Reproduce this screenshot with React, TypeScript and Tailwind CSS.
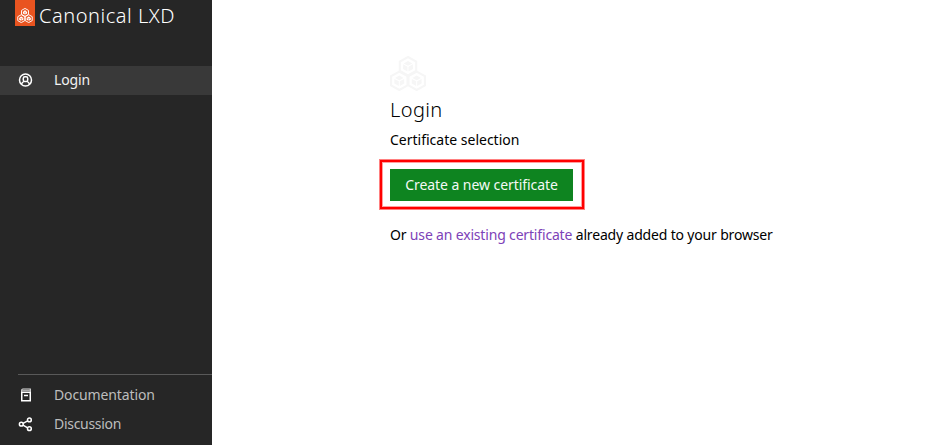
import type { ReactNode } from "react";

const centers = [
  [18, 10.2],
  [9.3, 24.8],
  [26.7, 24.8],
];

function Cluster({ className, line }: { className: string; line: number }) {
  return (
    <svg viewBox="0 0 36 35" className={className} fill="none" stroke="currentColor" strokeWidth={line}>
      {centers.map(([x, y]) => (
        <g key={`${x}-${y}`} transform={`translate(${x} ${y})`}>
          <path d="M0-9.2 8.2-4.6V4.6L0 9.2-8.2 4.6V-4.6Z" />
          <path d="M0-5.2 4.3-2.8 0-.5-4.3-2.8ZM-4.9-1.9-.5.5V5.2L-4.9 2.8ZM4.9-1.9.5.5V5.2L4.9 2.8Z" fill="currentColor" stroke="none" />
        </g>
      ))}
    </svg>
  );
}

function UserIcon() {
  return (
    <svg viewBox="0 0 16 16" className="size-4" fill="none" stroke="#fff" strokeWidth="1.5">
      <circle cx="7.5" cy="8" r="6" />
      <rect x="5.3" y="4.7" width="4.4" height="4.8" rx="1.6" />
      <path d="M3.5 12.2C3.9 10.6 4.9 9.8 6.3 9.4M11.5 12.2C11.1 10.6 10.1 9.8 8.7 9.4" />
    </svg>
  );
}

function BookIcon() {
  return (
    <svg viewBox="0 0 16 16" className="size-4" fill="none" stroke="#fff" strokeWidth="1.5">
      <path d="M3.75 5.2V13.75H12.25V5.2M3 5.25H13" />
      <path d="M3.7 5V3.2Q3.7 2 4.9 2H12.3V5" stroke="#ddd" strokeWidth="1.2" />
      <path d="M4 3.5H12" stroke="#aaa" strokeWidth="1.5" />
      <path d="M6 8.5H10" />
    </svg>
  );
}

function ShareIcon() {
  return (
    <svg viewBox="0 0 16 16" className="size-4" fill="none" stroke="#fff" strokeWidth="1.5">
      <circle cx="3.3" cy="8.2" r="1.9" />
      <circle cx="11.4" cy="3.9" r="1.9" />
      <circle cx="11.4" cy="12.7" r="1.9" />
      <path d="M5 7.3 9.7 4.8M5 9.1 9.7 11.8" />
    </svg>
  );
}

function NavItem({ icon, children, className }: { icon: ReactNode; children: ReactNode; className: string }) {
  return (
    <a className={`flex h-[29px] items-center pb-px pl-[18px] text-[14px] ${className}`}>
      {icon}
      <span className="ml-5 whitespace-nowrap">{children}</span>
    </a>
  );
}

export default function App() {
  return (
    <div className="flex h-[445px] w-[936px] overflow-hidden bg-white font-['Noto_Sans',sans-serif] text-[14px] leading-5 text-black">
      <aside className="flex w-[212px] shrink-0 flex-col bg-[#262626]">
        <header className="flex h-[66px] items-start pl-[15px]">
          <div className="flex h-[26px] w-5 items-end justify-center bg-[#e95420] pb-[3px] text-white">
            <Cluster className="h-[15px] w-4" line={2.2} />
          </div>
          <span className="ml-1 mt-0.5 whitespace-nowrap text-[20px] font-light leading-7 tracking-[0.53px] text-white">Canonical LXD</span>
        </header>
        <nav>
          <NavItem icon={<UserIcon />} className="bg-[#393939] tracking-[-0.15px] text-[#f2f2f2]">Login</NavItem>
        </nav>
        <nav className="mt-auto pb-[6px]">
          <hr className="mb-[6px] ml-[18px] border-[#595959]" />
          <NavItem icon={<BookIcon />} className="tracking-[-0.12px] text-[#bdbdbd]">Documentation</NavItem>
          <NavItem icon={<ShareIcon />} className="tracking-[-0.3px] text-[#bdbdbd]">Discussion</NavItem>
        </nav>
      </aside>
      <main className="flex flex-col items-start pl-[167px] pt-14">
        <Cluster className="ml-[11px] h-[35px] w-9 text-[#f6f6f6]" line={2.1} />
        <h1 className="ml-[11px] mt-[5px] text-[20px] font-light leading-7 tracking-[0.4px]">Login</h1>
        <p className="ml-[11px] mt-[6px]">Certificate selection</p>
        <div className="mt-[9px] h-[51px] w-[206px] border border-[#ff8080]">
          <div className="h-full w-full border-2 border-[#ff0000]">
            <div className="h-full w-full border border-[#ffa0a0] pl-[7px] pt-[6px]">
              <button className="h-8 w-[183px] whitespace-nowrap bg-[#0e8420] tracking-[-0.06px] text-[#f4f9f5]">Create a new certificate</button>
            </div>
          </div>
        </div>
        <p className="ml-[11px] mt-[15px] whitespace-nowrap tracking-[-0.17px]">
          Or <a className="text-[#7d42b8]">use an existing certificate</a> already added to your browser
        </p>
      </main>
    </div>
  );
}
